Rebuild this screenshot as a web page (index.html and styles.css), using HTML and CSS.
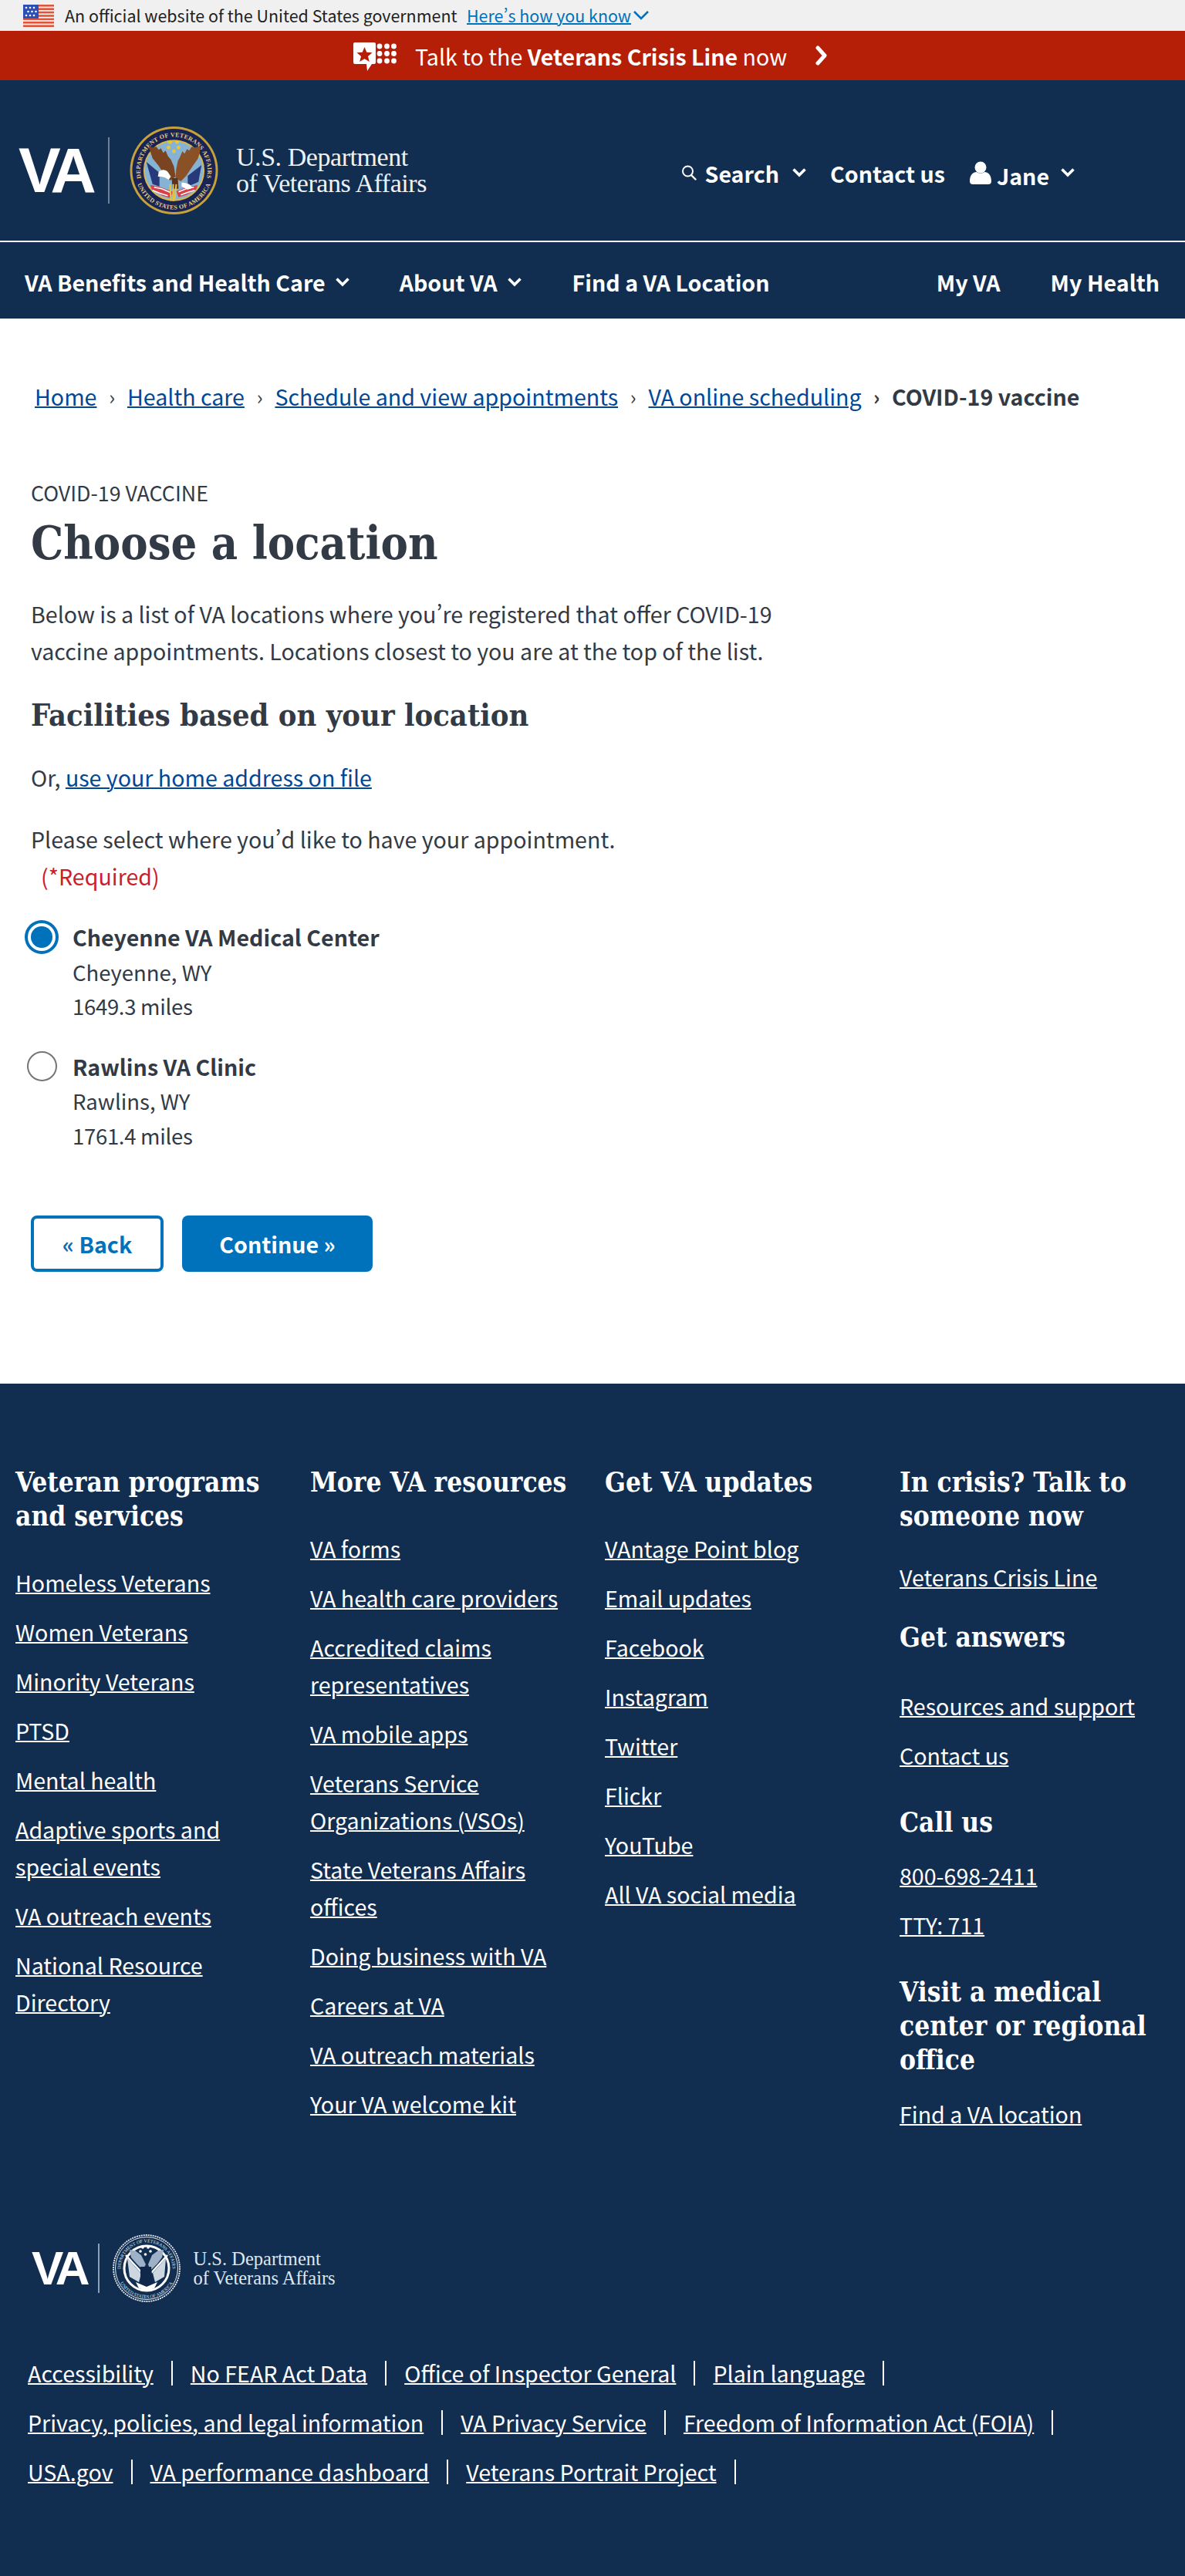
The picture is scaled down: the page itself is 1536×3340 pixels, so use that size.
FILE: index.html
```html
<!DOCTYPE html>
<html lang="en">
<head>
<meta charset="utf-8">
<title>Choose a location</title>
<link rel="stylesheet" href="styles.css">
</head>
<body>
<div class="gov-banner">
  <svg class="flag" viewBox="0 0 40 29" aria-hidden="true">
    <rect width="40" height="29" fill="#f7f1ef"/>
    <g fill="#e2543a"><rect width="40" height="2.6"/><rect y="4.4" width="40" height="2.6"/><rect y="8.8" width="40" height="2.6"/><rect y="13.2" width="40" height="2.6"/><rect y="17.6" width="40" height="2.6"/><rect y="22" width="40" height="2.6"/><rect y="26.4" width="40" height="2.6"/></g>
    <rect width="20" height="18" fill="#2d4fb5"/>
    <g fill="#fff"><circle cx="4" cy="4" r="1.3"/><circle cx="9" cy="4" r="1.3"/><circle cx="14" cy="4" r="1.3"/><circle cx="6.5" cy="9" r="1.3"/><circle cx="11.5" cy="9" r="1.3"/><circle cx="16.5" cy="9" r="1.3"/><circle cx="4" cy="14" r="1.3"/><circle cx="9" cy="14" r="1.3"/><circle cx="14" cy="14" r="1.3"/></g>
  </svg>
  <span class="gov-text">An official website of the United States government</span>
  <a class="gov-link" href="#">Here’s how you know</a>
  <svg class="gov-chev" viewBox="0 0 22 14" aria-hidden="true"><path d="M2 2l9 9 9-9" fill="none" stroke="#0071bb" stroke-width="2.6"/></svg>
</div>

<div class="crisis">
  <svg class="crisis-icon" viewBox="0 0 56 38" aria-hidden="true">
    <path d="M2 0h25a2 2 0 0 1 2 2v24a2 2 0 0 1-2 2h-3l-6 9-1-9H2a2 2 0 0 1-2-2V2a2 2 0 0 1 2-2z" fill="#fff"/>
    <path d="M14.500 6l2.800 6.800 7.200.5-5.500 4.700 1.800 7-6.300-3.800-6.300 3.800 1.800-7-5.500-4.700 7.200-.5z" fill="#b51f07"/>
    <g fill="#fff"><circle cx="34" cy="5" r="3.400"/><circle cx="43.500" cy="5" r="3.400"/><circle cx="52.500" cy="5" r="3.400"/><circle cx="34" cy="14.500" r="3.400"/><circle cx="43.500" cy="14.500" r="3.400"/><circle cx="52.500" cy="14.500" r="3.400"/><circle cx="34" cy="24" r="3.400"/><circle cx="43.500" cy="24" r="3.400"/><circle cx="52.500" cy="24" r="3.400"/></g>
  </svg>
  <span class="crisis-text">Talk to the <b>Veterans Crisis Line</b> now</span>
  <svg class="crisis-chev" viewBox="0 0 18 26" aria-hidden="true"><path d="M4 3l9 10-9 10" fill="none" stroke="#fff" stroke-width="5" stroke-linecap="round" stroke-linejoin="round"/></svg>
</div>

<header class="masthead">
  <div class="logo">
    <span class="logo-va">VA</span>
    <span class="logo-sep"></span>
    <svg class="seal" viewBox="0 0 116 116" aria-hidden="true">
      <defs><path id="ringtop" d="M22 83.200A44 44 0 1 1 94 83.200"/><path id="ringbot" d="M7.800 66.900A51 51 0 0 0 108.200 66.900"/></defs>
      <circle cx="58" cy="58" r="57.500" fill="#c7a23a"/>
      <circle cx="58" cy="58" r="54.500" fill="#1a2454"/>
      <circle cx="58" cy="58" r="40" fill="#d8b84a"/>
      <circle cx="58" cy="58" r="38" fill="#86b3d4"/>
      <text class="seal-ring" fill="#e6cf80"><textPath href="#ringtop" startOffset="50%" text-anchor="middle">DEPARTMENT OF VETERANS AFFAIRS</textPath></text>
      <text class="seal-ring" fill="#e6cf80"><textPath href="#ringbot" startOffset="50%" text-anchor="middle">UNITED STATES OF AMERICA</textPath></text>
      <path d="M22 47l17 14v18l-9-3z" fill="#27397a"/>
      <path d="M94 51L76 65v14l14-6z" fill="#27397a"/>
      <path d="M27 77l14 3 16 6-4 8-10-3-14-8z" fill="#d8414a"/>
      <path d="M32 80l10 2 12 5M30 84l10 4 10 3" stroke="#fff" stroke-width="1.500" fill="none"/>
      <path d="M89 77l-14 3-14 5 3 8 10-3 13-7z" fill="#d8414a"/>
      <path d="M84 80l-10 2-10 4M85 84l-10 3-8 3" stroke="#fff" stroke-width="1.500" fill="none"/>
      <path d="M25 27l6 1 4-1 3 4 3-2 3 6 3-3 3 7 4 5 4 9 2 13-7 5-8-8-7-11-8-10-3-9z" fill="#7a4420"/>
      <path d="M92 26l-6 2-5-1-3 5-3-2-3 6-3-3-3 7-3 6-2 10-1 12 7 4 7-7 8-12 7-10 3-9z" fill="#8a5026"/>
      <path d="M38 60c4-4 9-3 12 0l4 6-3 4-5-3-5-1-4 0z" fill="#fff"/>
      <path d="M68 74c6 0 12 2 14 7l-6 2-8-4z" fill="#fff"/>
      <path d="M55 68h8l1 14h-8z" fill="#5f3318"/>
      <path d="M53 76l1 22M57 76v22M61 76l-2 20" stroke="#e5c63f" stroke-width="2" fill="none"/>
      <g fill="#e5c63f"><circle cx="53" cy="21" r="2.500"/><circle cx="62" cy="21" r="2.500"/><circle cx="51" cy="28" r="2.500"/><circle cx="64" cy="28" r="2.500"/><circle cx="58" cy="33" r="2.500"/></g>
    </svg>
    <div class="logo-name"><span>U.S. Department</span><span>of Veterans Affairs</span></div>
  </div>
  <div class="utility">
    <a class="util-item util-search" href="#">
      <svg class="icon-search" viewBox="0 0 20 20" aria-hidden="true"><circle cx="8.500" cy="8" r="6.500" fill="none" stroke="#fff" stroke-width="2"/><path d="M13 13l5.500 5.500" stroke="#fff" stroke-width="2.400" stroke-linecap="round"/></svg>
      <span>Search</span>
      <svg class="chev" viewBox="0 0 20 14" aria-hidden="true"><path d="M2.500 2.500L10 10l7.500-7.500" fill="none" stroke="#fff" stroke-width="3.600"/></svg>
    </a>
    <a class="util-item util-contact" href="#">Contact us</a>
    <a class="util-item util-user" href="#">
      <svg class="icon-user" viewBox="0 0 28 30" aria-hidden="true"><circle cx="14" cy="8" r="7.500" fill="#fff"/><path d="M0 26c0-8 4-12 9-12 3 2 7 2 10 0 5 0 9 4 9 12 0 3-2 4-4 4H4c-2 0-4-1-4-4z" fill="#fff"/></svg>
      <span class="user-name">Jane</span>
      <svg class="chev chev-user" viewBox="0 0 20 14" aria-hidden="true"><path d="M2.500 2.500L10 10l7.500-7.500" fill="none" stroke="#fff" stroke-width="3.600"/></svg>
    </a>
  </div>
</header>
<nav class="mainnav">
  <a class="nav-item nav-benefits" href="#">VA Benefits and Health Care<svg class="chev" viewBox="0 0 20 14" aria-hidden="true"><path d="M2.500 2.500L10 10l7.500-7.500" fill="none" stroke="#fff" stroke-width="3.600"/></svg></a>
  <a class="nav-item nav-about" href="#">About VA<svg class="chev" viewBox="0 0 20 14" aria-hidden="true"><path d="M2.500 2.500L10 10l7.500-7.500" fill="none" stroke="#fff" stroke-width="3.600"/></svg></a>
  <a class="nav-item nav-find" href="#">Find a VA Location</a>
  <a class="nav-item nav-myva" href="#">My VA</a>
  <a class="nav-item nav-myhealth" href="#">My Health</a>
</nav>

<main class="content">
  <ol class="crumbs">
    <li><a href="#">Home</a></li>
    <li><a href="#">Health care</a></li>
    <li><a href="#">Schedule and view appointments</a></li>
    <li><a href="#">VA online scheduling</a></li>
    <li class="current">COVID-19 vaccine</li>
  </ol>
  <div class="eyebrow">COVID-19 VACCINE</div>
  <h1 class="title">Choose a location</h1>
  <p class="intro">Below is a list of VA locations where you’re registered that offer COVID-19<br>vaccine appointments. Locations closest to you are at the top of the list.</p>
  <h2 class="subtitle">Facilities based on your location</h2>
  <p class="home-note">Or, <a href="#">use your home address on file</a></p>
  <p class="prompt">Please select where you’d like to have your appointment.</p>
  <p class="required">(*Required)</p>
  <div class="option option-first">
    <span class="radio-wrap"><span class="radio radio-on"></span></span>
    <div class="option-text"><strong>Cheyenne VA Medical Center</strong><span>Cheyenne, WY</span><span class="miles">1649.3 miles</span></div>
  </div>
  <div class="option">
    <span class="radio-wrap"><span class="radio"></span></span>
    <div class="option-text"><strong>Rawlins VA Clinic</strong><span>Rawlins, WY</span><span class="miles">1761.4 miles</span></div>
  </div>
  <div class="actions">
    <button class="btn btn-back">« Back</button>
    <button class="btn btn-next">Continue »</button>
  </div>
</main>

<footer class="footer">
  <div class="foot-cols">
    <section>
      <h3>Veteran programs and services</h3>
      <ul>
        <li><a href="#">Homeless Veterans</a></li><li><a href="#">Women Veterans</a></li><li><a href="#">Minority Veterans</a></li><li><a href="#">PTSD</a></li><li><a href="#">Mental health</a></li><li><a href="#">Adaptive sports and special events</a></li><li><a href="#">VA outreach events</a></li><li><a href="#">National Resource Directory</a></li>
      </ul>
    </section>
    <section>
      <h3>More VA resources</h3>
      <ul>
        <li><a href="#">VA forms</a></li><li><a href="#">VA health care providers</a></li><li><a href="#">Accredited claims representatives</a></li><li><a href="#">VA mobile apps</a></li><li><a href="#">Veterans Service Organizations (VSOs)</a></li><li><a href="#">State Veterans Affairs offices</a></li><li><a href="#">Doing business with VA</a></li><li><a href="#">Careers at VA</a></li><li><a href="#">VA outreach materials</a></li><li><a href="#">Your VA welcome kit</a></li>
      </ul>
    </section>
    <section>
      <h3>Get VA updates</h3>
      <ul>
        <li><a href="#">VAntage Point blog</a></li><li><a href="#">Email updates</a></li><li><a href="#">Facebook</a></li><li><a href="#">Instagram</a></li><li><a href="#">Twitter</a></li><li><a href="#">Flickr</a></li><li><a href="#">YouTube</a></li><li><a href="#">All VA social media</a></li>
      </ul>
    </section>
    <section class="col-contact">
      <h3>In crisis? Talk to someone now</h3>
      <ul class="list-crisis"><li><a href="#">Veterans Crisis Line</a></li></ul>
      <h3 class="h-answers">Get answers</h3>
      <ul class="list-answers"><li><a href="#">Resources and support</a></li><li><a href="#">Contact us</a></li></ul>
      <h3 class="h-call">Call us</h3>
      <ul class="list-call"><li><a href="#">800-698-2411</a></li><li><a href="#">TTY: 711</a></li></ul>
      <h3 class="h-visit">Visit a medical center or regional office</h3>
      <ul class="list-visit"><li><a href="#">Find a VA location</a></li></ul>
    </section>
  </div>
  <div class="foot-logo">
    <span class="foot-va">VA</span>
    <span class="foot-sep"></span>
    <svg class="foot-seal" viewBox="0 0 88 88" aria-hidden="true">
      <defs><path id="ftop" d="M16.600 63.200A33.500 33.500 0 1 1 71.400 63.200"/><path id="fbot" d="M5.600 50.800A39 39 0 0 0 82.400 50.800"/></defs>
      <circle cx="44" cy="44" r="43" fill="none" stroke="#e8edf3" stroke-width="1.800" stroke-dasharray="2 1"/>
      <circle cx="44" cy="44" r="40.500" fill="none" stroke="#e8edf3" stroke-width="1"/>
      <circle cx="44" cy="44" r="29" fill="none" stroke="#fff" stroke-width="3"/>
      <text class="foot-ring" fill="#dfe6ee"><textPath href="#ftop" startOffset="50%" text-anchor="middle">DEPARTMENT OF VETERANS AFFAIRS</textPath></text>
      <text class="foot-ring" fill="#dfe6ee"><textPath href="#fbot" startOffset="50%" text-anchor="middle">UNITED STATES OF AMERICA</textPath></text>
      <path d="M22 20l7 1 8 6 6 12-4 7-8-8-7-8zM66 20l-7 1-8 6-5 12 3 8 9-9 6-8z" fill="#9fb1c6"/>
      <path d="M19 31l18 20-3 11-12-7zM69 31L52 50l3 12 12-7z" fill="#cdd7e2"/>
      <path d="M17 27l22 24M71 27L50 50" stroke="#fff" stroke-width="2.400"/>
      <path d="M36 42h14l2 22-8 8-8-8z" fill="#10294a"/>
      <path d="M30 62l14 6 14-6-4 8-10 3-10-3z" fill="#fff"/>
      <g fill="#fff"><circle cx="39" cy="17" r="1.800"/><circle cx="46" cy="17" r="1.800"/><circle cx="36" cy="22" r="1.800"/><circle cx="49" cy="22" r="1.800"/><circle cx="42.500" cy="26" r="1.800"/></g>
    </svg>
    <div class="foot-name"><span>U.S. Department</span><span>of Veterans Affairs</span></div>
  </div>
  <div class="foot-links">
    <ul>
      <li><a href="#">Accessibility</a></li><li><a href="#">No FEAR Act Data</a></li><li><a href="#">Office of Inspector General</a></li><li><a href="#">Plain language</a></li>
    </ul>
    <ul>
      <li><a href="#">Privacy, policies, and legal information</a></li><li><a href="#">VA Privacy Service</a></li><li><a href="#">Freedom of Information Act (FOIA)</a></li>
    </ul>
    <ul>
      <li><a href="#">USA.gov</a></li><li><a href="#">VA performance dashboard</a></li><li><a href="#">Veterans Portrait Project</a></li>
    </ul>
  </div>
</footer>
</body>
</html>
```

FILE: styles.css
```css
* { box-sizing: border-box; }
html, body { margin: 0; padding: 0; }
body {
  width: 1536px;
  height: 3340px;
  font-family: "Noto Sans CJK SC", Lato, sans-serif;
  font-feature-settings: "pwid";
  font-size: 28.6px;
  color: #323a45;
  background: #fff;
  overflow: hidden;
}
a { color: inherit; text-decoration-thickness: 2px; }
ul, ol { list-style: none; margin: 0; padding: 0; }
h1, h2, h3, p { margin: 0; }

/* top banner */
.gov-banner { height: 40px; background: #f0f0f0; display: flex; align-items: center; padding-left: 30px; font-size: 21.45px; color: #212121; line-height: 40px; }
.flag { width: 40px; height: 29px; margin-right: 14px; }
.gov-text { width: 521px; white-space: nowrap; }
.gov-link { color: #0071bb; white-space: nowrap; }
.gov-chev { width: 22px; height: 14px; margin-left: 2px; }

.crisis { height: 64px; background: #b51f07; display: flex; align-items: center; padding-left: 458px; color: #fff; }
.crisis-icon { width: 56px; height: 38px; margin-right: 24px; margin-top: 3px; }
.crisis-text { width: 518px; }
.crisis-chev { width: 18px; height: 26px; }
.crisis-text b { font-weight: 700; }

.masthead { height: 210px; background: #112e51; border-bottom: 2px solid #fff; display: flex; align-items: center; justify-content: space-between; color: #fff; padding: 26px 0 0 24px; }
.logo { display: flex; align-items: center; }
.logo-va { font-family: "Liberation Sans", sans-serif; font-weight: 700; font-size: 82px; line-height: 60px; letter-spacing: -7px; width: 116px; }
.logo-sep { width: 2px; height: 86px; background: #6f8197; margin-right: 26px; }
.seal { width: 115px; height: 116px; margin-right: 24px; }
.seal-ring { font-family: "Liberation Serif", serif; font-size: 8px; font-weight: 700; letter-spacing: .3px; }
.logo-name { display: flex; flex-direction: column; font-family: "Liberation Serif", serif; font-size: 34px; line-height: 34px; color: #eef1f5; letter-spacing: -.45px; margin-left: -1px; }

.utility { display: flex; align-items: center; font-weight: 700; padding-right: 142px; margin-top: 6px; }
.util-item { display: flex; align-items: center; text-decoration: none; }
.icon-search { width: 20px; height: 20px; margin-right: 11px; }
.chev { width: 20px; height: 14px; margin-left: 16px; }
.chev-user { margin-left: 14px; }
.util-search { margin-right: 30px; }
.util-contact { margin-right: 32px; }
.icon-user { width: 28px; height: 30px; margin-right: 7px; }
.user-name { margin-top: 6px; }

.mainnav { height: 99px; background: #112e51; color: #fff; display: flex; align-items: center; padding: 4px 0 0 32px; font-weight: 700; }
.nav-item { display: flex; align-items: center; text-decoration: none; }
.nav-item .chev { margin-left: 12px; }
.nav-benefits { margin-right: 64px; }
.nav-about { margin-right: 65px; }
.nav-find { margin-right: auto; }
.nav-myva { margin-right: 65px; }
.nav-myhealth { margin-right: 33px; }

/* main */
.content { height: 1381px; padding: 77px 0 0 40px; }
.crumbs { display: flex; margin-left: 5px; line-height: 48px; color: #004795; margin-bottom: 81px; }
.crumbs li { display: flex; }
.crumbs li + li::before { content: "›"; width: 39.5px; text-align: center; color: #323a45; font-size: 26px; }
.crumbs .current { font-weight: 700; color: #323a45; }
.eyebrow { font-size: 26.8px; line-height: 40px; }
.title { font-family: "DejaVu Serif Condensed", "DejaVu Serif", serif; font-weight: 700; font-size: 59px; line-height: 72px; margin-top: 10px; }
.intro { line-height: 48px; margin-top: 31px; }
.subtitle { font-family: "DejaVu Serif Condensed", "DejaVu Serif", serif; font-weight: 700; font-size: 39.5px; line-height: 48px; margin-top: 35px; }
.home-note { line-height: 48px; margin-top: 33px; }
.home-note a { color: #004795; }
.prompt { line-height: 48px; margin-top: 32px; }
.required { color: #cd2026; line-height: 48px; margin: 0 0 0 13px; }

.option { display: flex; margin-top: 34px; }
.option-first { margin-top: 33px; }
.radio-wrap { width: 28px; height: 28px; display: flex; justify-content: center; align-items: center; flex: none; margin-right: 26px; margin-top: 8px; }
.radio { flex: none; width: 39px; height: 39px; border: 2px solid #757575; border-radius: 50%; background: #fff; }
.radio-on { width: 28px; height: 28px; border: 0; background: #0071bb; box-shadow: 0 0 0 4px #fff, 0 0 0 8px #0071bb; }
.option-text { display: flex; flex-direction: column; line-height: 44.5px; font-size: 27.5px; }
.option-text strong { font-weight: 700; font-size: 28.6px; }
.miles { letter-spacing: -.3px; }

.actions { display: flex; margin-top: 82px; }
.btn { height: 73px; border-radius: 8px; font: 700 28.6px "Noto Sans CJK SC", sans-serif; font-feature-settings: "pwid"; cursor: pointer; }
.btn-back { width: 172px; background: #fff; color: #0071bb; border: 4px solid #0071bb; margin-right: 24px; }
.btn-next { width: 247px; background: #0071bb; color: #fff; border: 0; }

/* footer */
.footer { height: 1546px; background: #112e51; color: #fff; padding: 106px 0 0 20px; }
.foot-cols { display: grid; grid-template-columns: repeat(4, 382px); height: 997px; }
.foot-cols h3 { font-family: "DejaVu Serif Condensed", "DejaVu Serif", serif; font-weight: 700; font-size: 35px; line-height: 44px; padding-right: 6px; }
.foot-cols ul { display: flex; flex-direction: column; gap: 16px; margin-top: 40px; }
.foot-cols li { line-height: 48px; padding-right: 20px; }
.foot-cols .list-crisis { margin-top: 33px; }
.foot-cols .h-answers { margin-top: 32px; }
.foot-cols .list-answers { margin-top: 43px; }
.foot-cols .h-call, .foot-cols .h-visit { margin-top: 41px; }
.foot-cols .list-call { margin-top: 23px; }
.foot-cols .list-visit { margin-top: 24px; }

.foot-logo { display: flex; align-items: center; height: 88px; margin-left: 21px; }
.foot-va { font-family: "Liberation Sans", sans-serif; font-weight: 700; font-size: 62px; line-height: 46px; letter-spacing: -6px; width: 86px; }
.foot-sep { width: 1.5px; height: 64px; background: #8ea0b5; margin-right: 17px; }
.foot-seal { width: 88px; height: 88px; margin-right: 17px; }
.foot-ring { font-family: "Liberation Serif", serif; font-size: 6px; }
.foot-name { display: flex; flex-direction: column; font-family: "Liberation Serif", serif; font-size: 24.5px; line-height: 25px; color: #dfe6ee; }

.foot-links { margin: 76px 0 0 16px; display: flex; flex-direction: column; gap: 32px; }
.foot-links ul { display: flex; }
.foot-links li { line-height: 32px; padding-right: 23px; margin-right: 23px; border-right: 2px solid #fff; }
```
